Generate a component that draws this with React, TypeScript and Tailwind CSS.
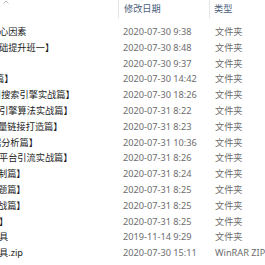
const rows = [
  { name: "心因素", shift: "ml-[-1px]", date: "2020-07-30 9:38", type: "文件夹" },
  { name: "础提升班一】", shift: "ml-[-1px]", date: "2020-07-30 8:48", type: "文件夹" },
  { name: "", shift: "", date: "2020-07-30 9:37", type: "文件夹" },
  { name: "篇】", shift: "ml-[-5px]", date: "2020-07-30 14:42", type: "文件夹" },
  { name: "引搜索引擎实战篇】", shift: "ml-[-8px]", date: "2020-07-30 18:26", type: "文件夹" },
  { name: "索引擎算法实战篇】", shift: "ml-[-10px]", date: "2020-07-31 8:22", type: "文件夹" },
  { name: "质量链接打造篇】", shift: "ml-[-11px]", date: "2020-07-31 8:23", type: "文件夹" },
  { name: "据分析篇】", shift: "ml-[-8px]", date: "2020-07-31 10:36", type: "文件夹" },
  { name: "平台引流实战篇】", shift: "ml-[-1px]", date: "2020-07-31 8:26", type: "文件夹" },
  { name: "制篇】", shift: "ml-[-2px]", date: "2020-07-31 8:24", type: "文件夹" },
  { name: "题篇】", shift: "ml-[-2px]", date: "2020-07-31 8:25", type: "文件夹" },
  { name: "战篇】", shift: "ml-[-2px]", date: "2020-07-31 8:25", type: "文件夹" },
  { name: "】", shift: "ml-[-1px]", date: "2020-07-31 8:25", type: "文件夹" },
  { name: "具", shift: "ml-[-1px]", date: "2019-11-14 9:29", type: "文件夹" },
  { name: "具.zip", shift: "ml-[-1px]", date: "2020-07-30 15:11", type: "WinRAR ZIP" },
]

export default function App() {
  return (
    <div className="w-[265px] h-[265px] overflow-hidden bg-white text-[9.2px] font-['Noto_Sans','Noto_Sans_CJK_SC',sans-serif]">
      {/* column header */}
      <div className="relative flex h-[20px] items-center">
        <svg className="absolute left-[3px] top-[0px]" width="6" height="4" viewBox="0 0 6 4">
          <path d="M0.5 3.5 L3 1 L5.5 3.5" fill="none" stroke="#a8a8a8" strokeWidth="0.8" />
        </svg>
        <div className="w-[118px] shrink-0" />
        <div className="flex h-[18px] w-[91px] shrink-0 items-center self-start border-l border-[#e5e5e5] pl-[5px] text-[#4c607a]">
          修改日期
        </div>
        <div className="flex h-[18px] flex-1 items-center self-start border-l border-[#e5e5e5] pl-[4px] text-[#4c607a]">
          类型
        </div>
      </div>

      <div className="mt-[4px] flex flex-col">
        {rows.map((r, i) => (
          <div key={i} className="flex h-[15.8px] items-center whitespace-nowrap">
            <div className="w-[118px] shrink-0 overflow-hidden text-[#1b1b1b]">
              <span className={`block ${r.shift}`}>{r.name}</span>
            </div>
            <div className="w-[91px] shrink-0 pl-[5px] text-[#6d6d6d]">{r.date}</div>
            <div className="flex-1 pl-[6px] text-[#6d6d6d]">{r.type}</div>
          </div>
        ))}
      </div>
    </div>
  )
}
